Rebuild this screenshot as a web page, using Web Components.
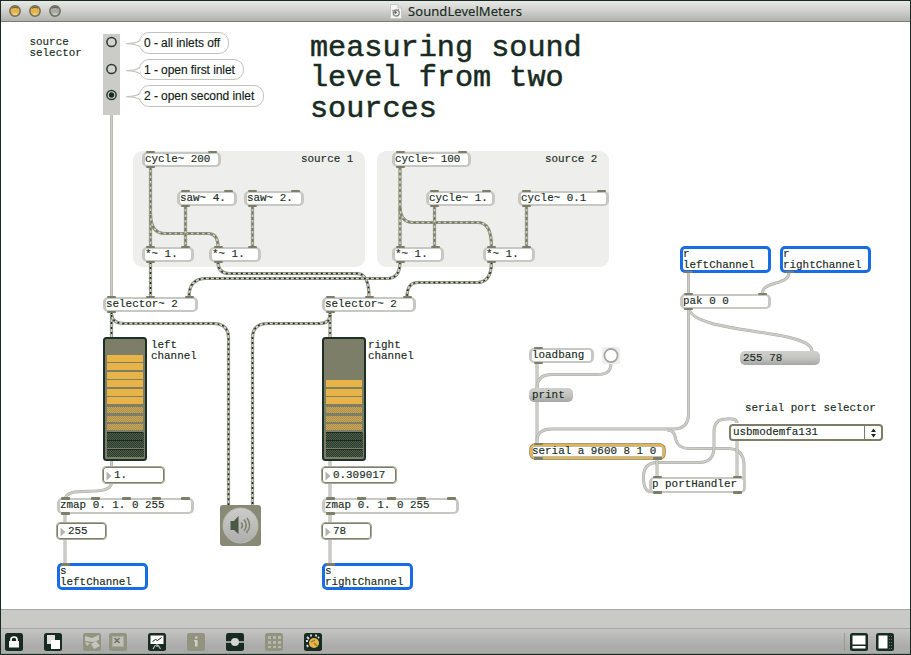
<!DOCTYPE html>
<html lang="en">
<head>
<meta charset="utf-8">
<title>SoundLevelMeters</title>
<style>
html,body{margin:0;height:100%}
body{--ink:#182b22;--olive:#7c7e68;--line:#c7c8c3;--blue:#176de5;--amber:#e8b448;color:var(--ink);background:#fff;overflow:hidden;
font:10.9px/11px "Liberation Mono","Courier New",monospace}
</style>
</head>
<body>
<max-window></max-window>
<script>
const define = (name, css, html, setup) => customElements.define(name, class extends HTMLElement {
  connectedCallback() {
    if (this.shadowRoot) return;
    const root = this.attachShadow({mode: 'open'});
    root.innerHTML = `<style>*{box-sizing:border-box}${css}</style>${typeof html === 'function' ? html(this) : html}`;
    if (setup) setup(this, root);
  }
});
// Places a node on the free patcher canvas.
const place = el => {
  for (const [a, p] of [['x','left'],['y','top'],['w','width'],['h','height']])
    if (el.hasAttribute(a)) el.style[p] = el.getAttribute(a) + 'px';
};
const list = (el, a) => (el.getAttribute(a) || '').split(' ').filter(Boolean).map(Number);

define('title-bar', `
:host{display:flex;flex:none;height:21px;align-items:center;position:relative;justify-content:center;
background:linear-gradient(#e8e8e6,#cfd0cc 50%,#b0b1ae);border-bottom:1px solid #7c7e70}
.lights{position:absolute;left:8px;top:4px;display:flex;gap:8px}
.title{display:flex;align-items:center;gap:6px;font:13px/20px "Noto Sans",sans-serif;letter-spacing:.06px;padding-left:1px;-webkit-text-stroke:.15px}
`, `<span class="lights">${['#e8b448','#e8b448','#a9aaa8'].map(c => `<svg width="12" height="12" viewBox="0 0 12 12"><circle cx="6" cy="6" r="5.2" fill="${c}" stroke="#6d6f5c" stroke-width="1.5"/><path d="M3 3.2Q6 1 9 3.2" stroke="#4b5347" stroke-width="1" fill="none"/><path d="M4 9h4" stroke="#e8e6d8"/></svg>`).join('')}</span>
<span class="title"><svg width="12" height="15" viewBox="0 0 12 15"><path d="M.5.5H8L11.5 4v10.500H.5z" fill="#f6f6f5" stroke="#c7c8c3"/><path d="M8 .5V4h3.500" fill="#ddd" stroke="#c7c8c3"/><circle cx="6.200" cy="9" r="3" fill="none" stroke="#8b8c80" stroke-width="1.300"/><circle cx="5.500" cy="8.500" r="1.200" fill="#555"/><path d="M2 6l3 2M8 6l1-1" stroke="#999"/></svg><slot></slot></span>`);

define('patch-object', `
:host{position:absolute;display:block;border:3px solid var(--line);border-top-width:2.500px;border-bottom-width:2px;border-radius:5px;background:#fff;white-space:pre}
:host([kind=remote]){border:3px solid var(--blue)}
:host([kind=serial]){border:2.500px solid var(--amber);box-shadow:inset 0 0 0 .5px var(--olive),0 0 0 .7px var(--olive)}
div{margin:0;-webkit-text-stroke:.15px}
i{position:absolute;width:9px;height:2.500px;background:var(--olive);border-radius:1px}
`, `<div><slot></slot></div>`, (el, root) => {
  place(el);
  const b = el.getAttribute('kind') === 'serial' ? 2 : 3;
  for (const [attr, edge] of [['in','top'],['out','bottom']]) for (const x of list(el, attr)) {
    const i = document.createElement('i');
    i.style.left = (x - Number(el.getAttribute('x')) - b - 4.5) + 'px';
    i.style[edge] = '-3px';
    root.append(i);
  }
});

define('patch-comment', `:host{position:absolute;display:block;white-space:pre;-webkit-text-stroke:.15px}
:host([big]){font-size:30.200px;line-height:30.500px;-webkit-text-stroke:.5px}`, `<slot></slot>`, place);

define('patch-panel', `:host{position:absolute;display:block;background:#eeeeec;border-radius:9px}`, ``, place);

define('number-box', `:host{position:absolute;display:flex;align-items:center;gap:2px;height:16px;border:1.600px solid var(--olive);outline:.5px solid #a8a998;border-width:1.500px;border-radius:3px;background:#fff;padding:1px 0 0 2px;-webkit-text-stroke:.15px}
svg{flex:none}`, `<svg width="6" height="10" viewBox="0 0 6 10"><path d="M.5.500L5.500 5L.500 9.500z" fill="#b3b4b0"/></svg><slot></slot>`, place);

define('message-box', `:host{position:absolute;display:block;height:14px;border-radius:5px;padding:2px 0 0 3px;background:linear-gradient(#d0d1cd,#c2c3bf 55%,#a5a6a3);-webkit-text-stroke:.15px;white-space:pre}`, `<slot></slot>`, place);

define('bang-button', `:host{position:absolute;display:block;width:18px;height:17px;background:#eee;border-radius:2px}svg{display:block}`,
`<svg width="18" height="17"><circle cx="9" cy="8.500" r="6.600" fill="#fff" stroke="#a3a49c" stroke-width="1.700"/></svg>`, place);

define('radio-group', `:host{position:absolute;display:flex;flex-direction:column;gap:14.500px;align-items:center;background:#cbccc7;padding-top:2px}svg{display:block;flex:none}`,
el => [0,1,2].map(n => `<svg width="12" height="12"><circle cx="5.500" cy="6" r="4.600" fill="#d2d3ce" stroke="#283a30" stroke-width="1.500"/>${n == el.getAttribute('value') ? '<circle cx="5.500" cy="6" r="2.700" fill="#182b22"/>' : ''}</svg>`).join(''), place);

define('hint-bubble', `:host{position:absolute;display:block;height:21.500px;border:1.200px solid #c2c3be;border-radius:10px;background:#fff;padding:1px 0 0 4px;font:12px/19.500px "Liberation Sans",Arial,sans-serif;letter-spacing:-.06px;white-space:pre;color:#111d17;-webkit-text-stroke:.15px}
svg{position:absolute;left:-14px;top:6px}`, `<svg width="15" height="9"><path d="M14 1.500Q10 4.500 0 4.700Q10 5 14 7.500" fill="#fff" stroke="#c2c3be" stroke-width="1.100"/></svg><slot></slot>`, place);

define('level-meter', `:host{position:absolute;display:block;width:44px;height:124px}svg{display:block}`, el => {
  const tops = [18,26,35,43,52,60,70,79,87,95,103,112];
  return `<svg width="44" height="124"><defs>
<pattern id="mid" width="2" height="2" patternUnits="userSpaceOnUse"><path d="M0 0h2v2H0z" fill="#a58f58"/><path d="M0 0h1v1H0zM1 1h1v1H1z" fill="#d2a74c"/></pattern>
<pattern id="low" width="2" height="2" patternUnits="userSpaceOnUse"><path d="M0 0h2v2H0z" fill="#535d4a"/><path d="M0 0h1v1H0zM1 1h1v1H1z" fill="#263a2e"/></pattern></defs>
<rect x="1" y="1" width="42" height="122" rx="2.500" fill="#7c7e68" stroke="#1d3026" stroke-width="2"/>
<g shape-rendering="crispEdges">${tops.map((y, i) => i > 8
    ? `<rect x="4" y="${y}" width="37" height="8" fill="url(#low)"/><rect x="4" y="${y}" width="36" height="1" fill="#182b22"/>`
    : i > 5 ? `<rect x="4" y="${y}" width="36" height="6" fill="url(#mid)"/>`
    : i >= 6 - el.getAttribute('lit') ? `<rect x="4" y="${y}" width="36" height="7" fill="#e8b448"/>` : '').join('')}</g></svg>`;
}, place);

define('port-menu', `:host{position:absolute;display:flex;height:17px;border:1.500px solid var(--olive);border-width:2px;border-radius:4px;background:#fff;-webkit-text-stroke:.15px}
.label{flex:1;padding:1px 0 0 2px}.arrows{width:17px;border-left:1px solid var(--olive);display:flex;justify-content:center;align-items:center}`,
`<span class="label"><slot></slot></span><span class="arrows"><svg width="7" height="10"><path d="M1 4L3.500.500L6 4zM1 6L3.500 9.500L6 6z" fill="#182b22"/></svg></span>`, place);

define('audio-toggle', `:host{position:absolute;display:block;width:41px;height:41px;background:#888a76;border-radius:3px}svg{display:block}`,
`<svg width="41" height="41"><defs><linearGradient id="g" x2="0" y2="1"><stop stop-color="#ccccc9"/><stop offset="1" stop-color="#adaeab"/></linearGradient></defs><circle cx="20.500" cy="20.500" r="17.500" fill="url(#g)" stroke="#b9baae"/><path d="M10.500 16H14L18.500 11V29L14 25H10.500z" fill="#4a5846"/><g fill="none" stroke="#7c7e68" stroke-width="1.500"><path d="M21 17.500Q24 20.500 21 23.500M24 14.500Q28.500 20.500 24 26M27 13Q32.500 20.500 26.500 28"/></g></svg>`, place);

define('patch-cords', `:host{position:absolute;inset:0;display:block}svg{display:block;width:100%;height:100%}path{fill:none}
.c{stroke:#a9aaa4;stroke-width:3}.d{stroke:#cbccc7;stroke-width:2}
.s{stroke:#85876f;stroke-width:3.200}.t{stroke:#cfd0ca;stroke-width:1.700}.u{stroke:#182b22;stroke-width:1.500;stroke-dasharray:2 3}.v{stroke:#74765f;stroke-width:1.600;stroke-dasharray:3 2.500}`, () => {
  const control = ['M111.500 115V297','M111.500 461V467','M111.500 482C112 499 65.500 484 65.500 499','M65 513V523M65 539V565','M330 461V467M330 483V498M330 513V523M330 539V565',
    'M688.500 272V294','M789 272C789 287 762 279 762 295','M688.500 308C694 335 811 328 812 351',
    'M537 363V388M537 402V444','M611 363C611 372 606 374.500 597 374.500H552Q537 374.500 537 388','M688.500 308V414Q688.500 429 673 429H552Q537 429 537 441',
    'M667 430C674 430 675 435 676 440Q678 448.500 689 448.500H728Q744 449 744 465V484Q744 491 738 491',
    'M657 491C644 495 643.500 484 643.500 477Q643.500 462.500 658 462.500H699Q714 462.500 714 447V432Q714 419 726 419Q737 418 737 423','M657 458V477M737 440V477'];
  const inner = ['M150.500 167V247','M150.500 215Q151 233.500 165 233.500H208Q218 233.500 218 247','M185.500 206V247M252.500 206V247','M400 167V247','M400 208Q401 222.500 413 222.500H478Q491.500 222.500 491.500 247','M434.500 206V247M526.500 206V247'];
  const outer = ['M150.500 262V297','M218 262Q218 273.500 229 273.500H357Q369 273.500 369 297','M400 262Q400 278.500 387 278.500H206Q189 278.500 189 297','M491.500 262Q491.500 282.500 477 282.500H418Q407 282.500 407 297',
    'M111.500 312V337','M111.500 315Q113 323.500 124 323.500H213Q228.500 323.500 228.500 338V505','M330 312V337','M330 315Q330 323.500 319 323.500H268Q252.500 323.500 252.500 338V505'];
  const draw = (paths, classes) => paths.map(d => classes.map(c => `<path class="${c}" d="${d}"/>`).join('')).join('');
  return `<svg>${draw(control, ['c','d'])}${draw(outer, ['s','t','u'])}${draw(inner, ['s','t','v'])}</svg>`;
});

define('patch-canvas', `:host{display:block;position:relative;flex:1;min-height:0}
/* Patcher coordinates are measured from the window's outer corner. */
.origin{position:absolute;left:-1px;top:-22px;width:911px;height:630px}`, `<div class="origin"><slot></slot></div>`);

const glyphs = {
  lock: '<path d="M4 8h10v6.500H4z" fill="#fff"/><path d="M6 9V6.500Q6 4 9 4t3 2.500V9" fill="none" stroke="#fff" stroke-width="1.700"/>',
  copy: '<path d="M3 2h8v9H3z" fill="#e0e1dc"/><path d="M7 7h9v9H7z" fill="#fff"/>',
  cord: '<path d="M2 3l7 2 7-3v5l-6 2-8-1zM8 11l5-3 4 5-6 3zM2 9l5 1-3 3z" fill="#c4c5bf"/>',
  close: '<rect x="3.500" y="3.500" width="11" height="10" fill="#bfc0ba" stroke="#a9aaa0"/><path d="M5.500 5l5 5M10.500 5l-5 5" stroke="#6f725e" stroke-width="1.500"/>',
  board: '<path d="M2.500 2.500h13v8.500h-13z" fill="#fff"/><path d="M5 16l2.500-4M12.500 16L10 12M9 11v3" fill="none" stroke="#b8bbb0" stroke-width="1.300"/><path d="M4.500 8.500l3-2 2 1 4-3" fill="none" stroke="#182b22"/>',
  info: '<path d="M8 3.500h2.500v2H8zM7 7h3.500v6.500H8V8.500H7z" fill="#cfd0ca"/>',
  dial: '<path d="M0 9h18" stroke="#c7c8c3" stroke-width="1.500"/><circle cx="9" cy="9" r="4" fill="#d5d6d1"/>',
  grid: '<path d="M3 3h3v3H3zm5 0h3v3H8zm5 0h3v3h-3zM3 8h3v3H3zm5 0h3v3H8zm5 0h3v3h-3zM3 13h3v2H3zm5 0h3v2H8zm5 0h3v2h-3z" fill="#b6b8b0"/>',
  sun: '<circle cx="10" cy="10" r="5" fill="#e8b448"/><path d="M10 10l3 3M7 9l4-2" stroke="#91743a" stroke-width="1.300"/><path d="M2 8h2M3 4l2 2M7 1.500v2M12 1.500v2M3 12l1 2M15 4l-1 1" stroke="#e0e1dc" stroke-width="1.800"/>',
  bottom: '<path d="M2.500 2.500h13v9h-13zM2.500 13h13v2.500h-13z" fill="#fff"/>',
  side: '<path d="M2.500 2.500h9v13h-9z" fill="#fff"/><path d="M13.500 3v13M15.500 3v13" stroke="#687060" stroke-dasharray="1 2"/>'
};
define('tool-icon', `:host{display:block;width:18px;height:18px;flex:none}svg{display:block}`, el => {
  const off = el.hasAttribute('off');
  return `<svg width="18" height="18"><rect width="18" height="18" rx="2.500" fill="${off ? '#92947f' : '#182b22'}"/>${glyphs[el.getAttribute('name')]}</svg>`;
});
define('tool-bar', `:host{display:flex;flex:none;height:26px;align-items:center;padding:1px 16px 0 4px;gap:21px;border-top:1px solid #a7a8a5;background:linear-gradient(#c5c6c2,#aaabaa 75%);border-bottom:1px solid #999a91}
.pair{display:flex;gap:8px}.right{margin-left:auto;padding-left:5px;border-left:1px solid #999b8b}`,
`<tool-icon name="lock"></tool-icon><tool-icon name="copy"></tool-icon><span class="pair"><tool-icon name="cord" off></tool-icon><tool-icon name="close" off></tool-icon></span><tool-icon name="board"></tool-icon><tool-icon name="info" off></tool-icon><tool-icon name="dial"></tool-icon><tool-icon name="grid" off></tool-icon><tool-icon name="sun"></tool-icon><span class="pair right"><tool-icon name="bottom"></tool-icon><tool-icon name="side"></tool-icon></span>`);
define('status-strip', `:host{display:block;flex:none;height:19px;background:#c9cac5;border-top:1px solid #a7a8a5}`, ``);

const obj = (x,y,w,text,ins,outs='',kind='',h=15.5) => `<patch-object x="${x}" y="${y}" w="${w}" h="${h}" in="${ins}" out="${outs}" kind="${kind}">${text}</patch-object>`;
define('max-window', `:host{display:flex;flex-direction:column;box-sizing:border-box;width:911px;height:655px;border:1px solid var(--ink);background:#fff}`, `
<title-bar>SoundLevelMeters</title-bar>
<patch-canvas>
<patch-panel x="133" y="151" w="232" h="116"></patch-panel><patch-panel x="377" y="151" w="232" h="116"></patch-panel>
<patch-cords></patch-cords>
<patch-comment x="29.5" y="36.6">source\nselector</patch-comment>
<radio-group x="103" y="34" w="17" h="81" value="2"></radio-group>
<hint-bubble x="139" y="32" w="90">0 - all inlets off</hint-bubble><hint-bubble x="139" y="58.5" w="105">1 - open first inlet</hint-bubble><hint-bubble x="139" y="85" w="125">2 - open second inlet</hint-bubble>
<patch-comment big x="310" y="32.5">measuring sound\nlevel from two\nsources</patch-comment>
<patch-comment x="301" y="153.5">source 1</patch-comment><patch-comment x="545" y="153.5">source 2</patch-comment>
${obj(142,151.5,79,'cycle~ 200','150.5 212','150.5')}
${obj(177,190.5,60,'saw~ 4.','185.5 228.5','185.5')}
${obj(244,190.5,60,'saw~ 2.','252.5 295.5','252.5')}
${obj(142,246.5,52,'*~ 1.','150.5 185','150.5')}
${obj(209,246.5,52,'*~ 1.','218 252','218')}
${obj(392,151.5,79,'cycle~ 100','400.5 462.5','400.5')}
${obj(426,190.5,69,'cycle~ 1.','434.5 486.5','434.5')}
${obj(518,190.5,91,'cycle~ 0.1','526.5 601.5','526.5')}
${obj(392,246.5,52,'*~ 1.','400.5 435','400.5')}
${obj(483,246.5,52,'*~ 1.','491.5 526','491.5')}
${obj(103,296.5,95,'selector~ 2','111.5 150.5 189','111.5')}
${obj(322,296.5,94,'selector~ 2','330.5 369 407','330.5')}
<level-meter x="103" y="337" lit="6"></level-meter><level-meter x="322" y="337" lit="3"></level-meter>
<patch-comment x="151" y="340">left\nchannel</patch-comment><patch-comment x="368" y="340">right\nchannel</patch-comment>
<number-box x="103" y="467" w="61">1.</number-box><number-box x="322" y="467" w="74">0.309017</number-box>
${obj(57,498,137,'zmap 0. 1. 0 255','65.5 95.5 126 156 185.5','65.5')}
${obj(322,498,137,'zmap 0. 1. 0 255','330.5 361 391 421 451','330.5')}
<number-box x="57" y="523" w="49">255</number-box><number-box x="322" y="523" w="49">78</number-box>
${obj(57,563,91,'s\nleftChannel','65.5','','remote',27)}
${obj(322,563,91,'s\nrightChannel','330.5','','remote',27)}
<audio-toggle x="220" y="505"></audio-toggle>
${obj(680,246,91,'r\nleftChannel','','688.5','remote',27)}
${obj(780,246,91,'r\nrightChannel','','789','remote',27)}
${obj(680,293.5,91,'pak 0 0','688.5 762','688.5')}
<message-box x="740" y="351" w="80">255 78</message-box>
${obj(529,347.5,65,'loadbang','538','538')}
<bang-button x="602" y="347"></bang-button>
<message-box x="529" y="388" w="44">print</message-box>
${obj(530,443.5,135,'serial a 9600 8 1 0','538','538 657','serial',15)}
<patch-comment x="745" y="402.5">serial port selector</patch-comment>
<port-menu x="729" y="424" w="154">usbmodemfa131</port-menu>
${obj(649,476.500,97,'p portHandler','657 737.5','657 737.5','',16)}
</patch-canvas>
<status-strip></status-strip>
<tool-bar></tool-bar>`);
</script>
</body>
</html>
